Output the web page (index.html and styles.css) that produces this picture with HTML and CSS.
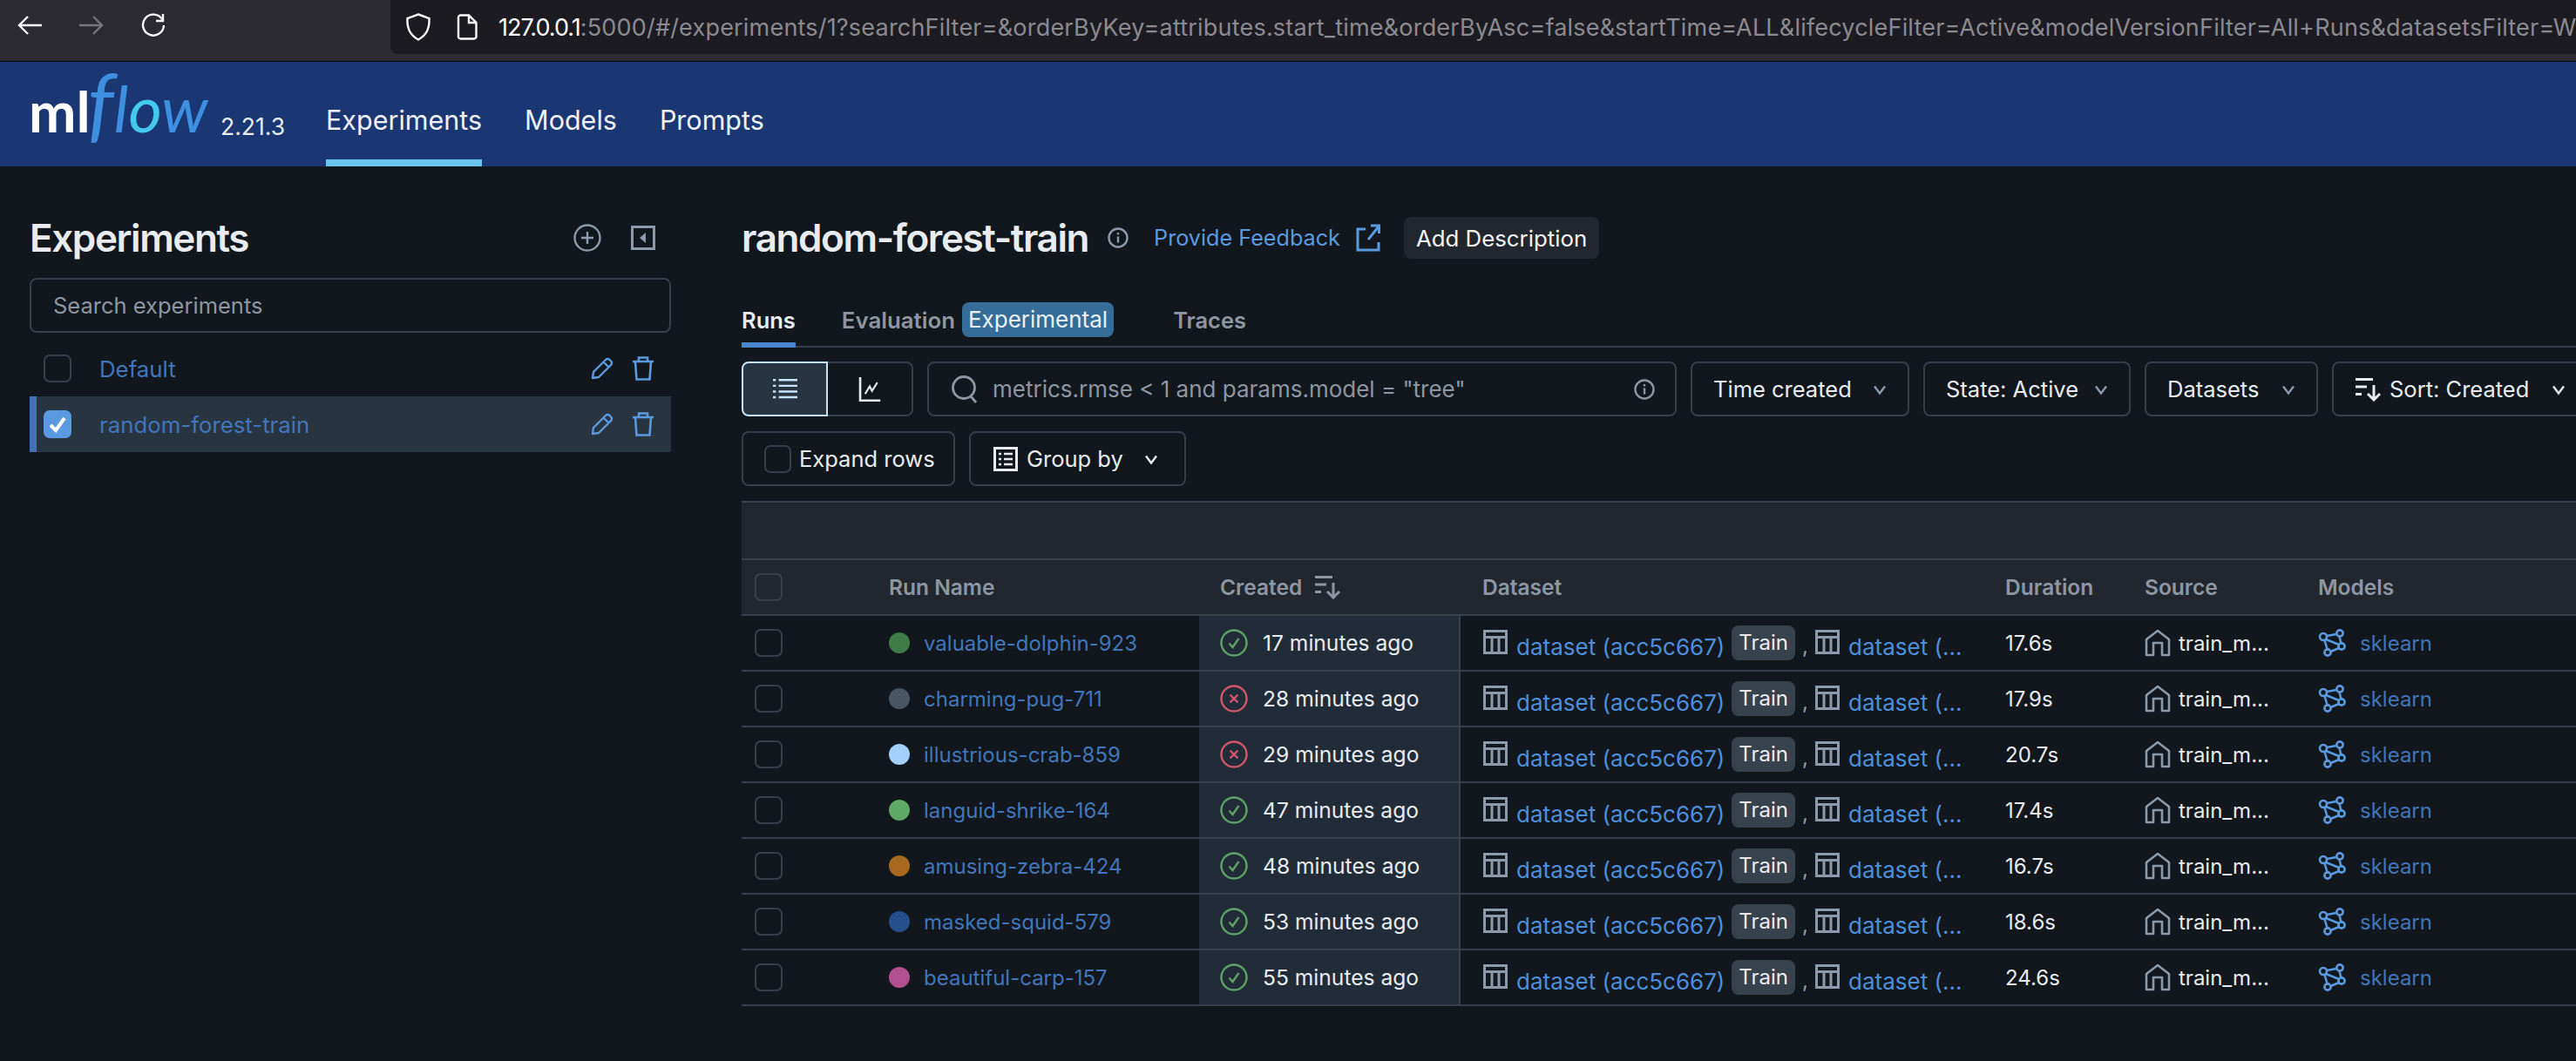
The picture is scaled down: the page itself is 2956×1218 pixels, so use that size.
FILE: index.html
```html
<!DOCTYPE html>
<html lang="en">
<head>
  <meta charset="UTF-8" />
  <title>MLflow</title>
  <link rel="stylesheet" href="styles.css">
</head>
<body>

  <svg class="defs" width="0" height="0">
    <symbol id="i-table" viewBox="0 0 28 28"><path d="M1.500 1.500h25v25h-25zM1.500 8.500h25M10 8.500v18M18 8.500v18" fill="none" stroke="currentColor" stroke-width="3"/></symbol>
    <symbol id="i-house" viewBox="0 0 30 32"><path d="M2 30V12L15 2l13 10v18h-8V16h-10v14z" fill="none" stroke="currentColor" stroke-width="2.600" stroke-linejoin="round"/></symbol>
    <symbol id="i-model" viewBox="0 0 32 32"><g fill="none" stroke="currentColor" stroke-width="2.600"><circle cx="6" cy="9" r="4"/><circle cx="25" cy="5" r="3.600"/><circle cx="27" cy="20" r="3.600"/><circle cx="11" cy="27" r="3.600"/><path d="M10 8l11-2M24.500 9l2 7.500M24 22l-9.500 4M7.500 13l3 10M9 12l15 6"/></g></symbol>
    <symbol id="i-ok" viewBox="0 0 32 32"><circle cx="16" cy="16" r="14.500" fill="none" stroke="#5da466" stroke-width="2.400"/><path d="M10.500 16.500l4 4.500 7-10" fill="none" stroke="#5da466" stroke-width="2.400"/></symbol>
    <symbol id="i-err" viewBox="0 0 32 32"><circle cx="16" cy="16" r="14.500" fill="none" stroke="#d4566c" stroke-width="2.400"/><path d="M11.500 11.500l9 9M20.500 11.500l-9 9" fill="none" stroke="#d4566c" stroke-width="2.400"/></symbol>
    <symbol id="i-pencil" viewBox="0 0 26 26"><path d="M2 24l1-7L17 3a3 3 0 0 1 4.500 0l1.500 1.500a3 3 0 0 1 0 4.500L9 23zM14.500 5.500l6 6" fill="none" stroke="currentColor" stroke-width="2.400" stroke-linejoin="round"/></symbol>
    <symbol id="i-trash" viewBox="0 0 26 28"><path d="M1 6h24M8 6V1.500h10V6M4 6l1.500 20.500h15L22 6" fill="none" stroke="currentColor" stroke-width="2.600"/></symbol>
    <symbol id="i-info" viewBox="0 0 24 24"><circle cx="12" cy="12" r="10.500" fill="none" stroke="currentColor" stroke-width="2.400"/><path d="M12 10.500v7M12 6v2.600" stroke="currentColor" stroke-width="2.400"/></symbol>
    <symbol id="i-chevron" viewBox="0 0 16 16"><path d="M2 4.500l6 8 6-8" fill="none" stroke="currentColor" stroke-width="2.400"/></symbol>
    <symbol id="i-sort" viewBox="0 0 30 28"><path d="M1 2.500h20M1 11h13M1 19.500h7M22 9v17M15 19l7 7 7-7" fill="none" stroke="currentColor" stroke-width="3"/></symbol>
  </svg>

  <div class="browser-bar">
    <div class="nav-btns">
      <svg class="nav-icon" viewBox="0 0 28 24"><path d="M28 12H2M12 2L2 12l10 10" fill="none" stroke="#fbfbfe" stroke-width="2.400"/></svg>
      <svg class="nav-icon dim" viewBox="0 0 28 24"><path d="M0 12h26M16 2l10 10-10 10" fill="none" stroke="#77767c" stroke-width="2.400"/></svg>
      <svg class="nav-icon" viewBox="0 0 28 28"><path d="M24 7A12 12 0 1 0 26 14M25 1v8h-8" fill="none" stroke="#fbfbfe" stroke-width="2.400"/></svg>
    </div>
    <div class="url-box">
      <svg class="shield" viewBox="0 0 28 32"><path d="M14 1.500L26.500 6c.5 12-3 19-12.500 24.500C4.500 25 1 18 1.500 6z" fill="none" stroke="#fbfbfe" stroke-width="2.400"/></svg>
      <svg class="file" viewBox="0 0 24 30"><path d="M2 4a2.500 2.500 0 0 1 2.500-2.500H14L22.500 10v16a2.500 2.500 0 0 1-2.500 2.500H4.500A2.500 2.500 0 0 1 2 26zM14 1.500V10h8.500" fill="none" stroke="#fbfbfe" stroke-width="2.400"/></svg>
      <div class="url"><span class="url-host">127.0.0.1</span>:5000/#/experiments/1?searchFilter=&amp;orderByKey=attributes.start_time&amp;orderByAsc=false&amp;startTime=ALL&amp;lifecycleFilter=Active&amp;modelVersionFilter=All+Runs&amp;datasetsFilter=W10=</div>
    </div>
  </div>

  <header class="topbar">
    <div class="logo"><span class="logo-ml">ml</span><span class="logo-flow"><span class="logo-f">f</span>l<span class="logo-o">o</span>w</span></div>
    <span class="version">2.21.3</span>
    <nav class="topnav">
      <a class="active">Experiments</a>
      <a>Models</a>
      <a>Prompts</a>
    </nav>
  </header>

  <div class="page">
    <aside class="sidebar">
      <div class="side-head">
        <h2>Experiments</h2>
        <div class="side-actions">
          <svg class="icon-plus" viewBox="0 0 32 32"><circle cx="16" cy="16" r="14.500" fill="none" stroke="currentColor" stroke-width="2.400"/><path d="M16 9v14M9 16h14" stroke="currentColor" stroke-width="2.400"/></svg>
          <svg class="icon-collapse" viewBox="0 0 28 28"><path d="M1.500 1.500h25v25h-25z" fill="none" stroke="currentColor" stroke-width="3"/><path d="M17 8v12l-7-6z" fill="currentColor"/></svg>
        </div>
      </div>
      <div class="side-search">Search experiments</div>
      <div class="exp-list">
        <div class="exp-row">
          <span class="check"></span>
          <span class="exp-name">Default</span>
          <svg class="icon-edit"><use href="#i-pencil"/></svg>
          <svg class="icon-del"><use href="#i-trash"/></svg>
        </div>
        <div class="exp-row selected">
          <span class="check checked"><svg viewBox="0 0 32 32"><path d="M8 17l6 6 10-14" fill="none" stroke="#fff" stroke-width="4"/></svg></span>
          <span class="exp-name">random-forest-train</span>
          <svg class="icon-edit"><use href="#i-pencil"/></svg>
          <svg class="icon-del"><use href="#i-trash"/></svg>
        </div>
      </div>
    </aside>

    <main class="content">
      <div class="title-row">
        <h1>random-forest-train</h1>
        <svg class="title-info"><use href="#i-info"/></svg>
        <a class="feedback">Provide Feedback</a>
        <svg class="ext-link" viewBox="0 0 28 32"><path d="M11 6H2v24h24v-9M14 18L26 3M17 2h9.500v9" fill="none" stroke="currentColor" stroke-width="3"/></svg>
        <button class="add-desc">Add Description</button>
      </div>

      <div class="tabs">
        <a class="tab active">Runs</a>
        <a class="tab eval">Evaluation</a>
        <span class="pill-exp">Experimental</span>
        <a class="tab traces">Traces</a>
      </div>

      <div class="toolbar">
        <div class="view-toggle">
          <span class="view-btn on">
            <svg viewBox="0 0 34 32"><path d="M8 3h26M8 11h26M8 19h26M8 27h26M0 3h4M0 11h4M0 19h4M0 27h4" stroke="#c5e3fb" stroke-width="3"/></svg>
          </span>
          <span class="view-btn">
            <svg viewBox="0 0 28 32"><path d="M1.500 0v30.500H28" fill="none" stroke="#e8ecf0" stroke-width="3"/><path d="M8 22l6-10 3 6 7-11" fill="none" stroke="#e8ecf0" stroke-width="2.400"/></svg>
          </span>
        </div>
        <div class="run-search">
          <svg class="search-icon" viewBox="0 0 30 32"><circle cx="14" cy="14" r="12.500" fill="none" stroke="currentColor" stroke-width="2.800"/><path d="M22 24l6 7" stroke="currentColor" stroke-width="2.800"/></svg>
          <span class="search-text">metrics.rmse &lt; 1 and params.model = "tree"</span>
          <svg class="search-info"><use href="#i-info"/></svg>
        </div>
        <button class="tool-btn btn-time">Time created <svg class="chev"><use href="#i-chevron"/></svg></button>
        <button class="tool-btn btn-state">State: Active <svg class="chev"><use href="#i-chevron"/></svg></button>
        <button class="tool-btn btn-data">Datasets <svg class="chev"><use href="#i-chevron"/></svg></button>
        <button class="tool-btn btn-sort"><svg class="sort-icon"><use href="#i-sort"/></svg> Sort: Created <svg class="chev light"><use href="#i-chevron"/></svg></button>
      </div>

      <div class="toolbar second">
        <label class="tool-btn btn-expand"><span class="check small"></span>Expand rows</label>
        <button class="tool-btn btn-group">
          <svg class="group-icon" viewBox="0 0 28 28"><path d="M1.500 1.500h25v25h-25z" fill="none" stroke="currentColor" stroke-width="3"/><path d="M6 8h3M12 8h10M6 14h3M12 14h10M6 20h3M12 20h10" stroke="currentColor" stroke-width="2.600"/></svg>
          Group by
          <svg class="chev light"><use href="#i-chevron"/></svg>
        </button>
      </div>

      <div class="runs-table">
        <div class="group-head"></div>
        <div class="t-row t-head">
          <div class="c-check"><span class="check"></span></div>
          <div>Run Name</div>
          <div class="c-created-head">Created <svg class="sort-icon dim"><use href="#i-sort"/></svg></div>
          <div class="c-data-head">Dataset</div>
          <div>Duration</div>
          <div>Source</div>
          <div>Models</div>
        </div>

        <div class="t-row">
          <div class="c-check"><span class="check"></span></div>
          <div class="c-name"><span class="dot dot-green"></span><a>valuable-dolphin-923</a></div>
          <div class="c-created"><svg class="status"><use href="#i-ok"/></svg>17 minutes ago</div>
          <div class="c-data"><svg class="tbl"><use href="#i-table"/></svg><a class="ds-link">dataset (acc5c667)</a><span class="tag">Train</span><span class="comma">,</span><svg class="tbl"><use href="#i-table"/></svg><a class="ds-link">dataset (…</a></div>
          <div class="c-val">17.6s</div>
          <div class="c-source"><svg class="house"><use href="#i-house"/></svg>train_m...</div>
          <div class="c-model"><svg class="model"><use href="#i-model"/></svg><a>sklearn</a></div>
        </div>
        <div class="t-row">
          <div class="c-check"><span class="check"></span></div>
          <div class="c-name"><span class="dot dot-grey"></span><a>charming-pug-711</a></div>
          <div class="c-created"><svg class="status"><use href="#i-err"/></svg>28 minutes ago</div>
          <div class="c-data"><svg class="tbl"><use href="#i-table"/></svg><a class="ds-link">dataset (acc5c667)</a><span class="tag">Train</span><span class="comma">,</span><svg class="tbl"><use href="#i-table"/></svg><a class="ds-link">dataset (…</a></div>
          <div class="c-val">17.9s</div>
          <div class="c-source"><svg class="house"><use href="#i-house"/></svg>train_m...</div>
          <div class="c-model"><svg class="model"><use href="#i-model"/></svg><a>sklearn</a></div>
        </div>
        <div class="t-row">
          <div class="c-check"><span class="check"></span></div>
          <div class="c-name"><span class="dot dot-sky"></span><a>illustrious-crab-859</a></div>
          <div class="c-created"><svg class="status"><use href="#i-err"/></svg>29 minutes ago</div>
          <div class="c-data"><svg class="tbl"><use href="#i-table"/></svg><a class="ds-link">dataset (acc5c667)</a><span class="tag">Train</span><span class="comma">,</span><svg class="tbl"><use href="#i-table"/></svg><a class="ds-link">dataset (…</a></div>
          <div class="c-val">20.7s</div>
          <div class="c-source"><svg class="house"><use href="#i-house"/></svg>train_m...</div>
          <div class="c-model"><svg class="model"><use href="#i-model"/></svg><a>sklearn</a></div>
        </div>
        <div class="t-row">
          <div class="c-check"><span class="check"></span></div>
          <div class="c-name"><span class="dot dot-lime"></span><a>languid-shrike-164</a></div>
          <div class="c-created"><svg class="status"><use href="#i-ok"/></svg>47 minutes ago</div>
          <div class="c-data"><svg class="tbl"><use href="#i-table"/></svg><a class="ds-link">dataset (acc5c667)</a><span class="tag">Train</span><span class="comma">,</span><svg class="tbl"><use href="#i-table"/></svg><a class="ds-link">dataset (…</a></div>
          <div class="c-val">17.4s</div>
          <div class="c-source"><svg class="house"><use href="#i-house"/></svg>train_m...</div>
          <div class="c-model"><svg class="model"><use href="#i-model"/></svg><a>sklearn</a></div>
        </div>
        <div class="t-row">
          <div class="c-check"><span class="check"></span></div>
          <div class="c-name"><span class="dot dot-orange"></span><a>amusing-zebra-424</a></div>
          <div class="c-created"><svg class="status"><use href="#i-ok"/></svg>48 minutes ago</div>
          <div class="c-data"><svg class="tbl"><use href="#i-table"/></svg><a class="ds-link">dataset (acc5c667)</a><span class="tag">Train</span><span class="comma">,</span><svg class="tbl"><use href="#i-table"/></svg><a class="ds-link">dataset (…</a></div>
          <div class="c-val">16.7s</div>
          <div class="c-source"><svg class="house"><use href="#i-house"/></svg>train_m...</div>
          <div class="c-model"><svg class="model"><use href="#i-model"/></svg><a>sklearn</a></div>
        </div>
        <div class="t-row">
          <div class="c-check"><span class="check"></span></div>
          <div class="c-name"><span class="dot dot-navy"></span><a>masked-squid-579</a></div>
          <div class="c-created"><svg class="status"><use href="#i-ok"/></svg>53 minutes ago</div>
          <div class="c-data"><svg class="tbl"><use href="#i-table"/></svg><a class="ds-link">dataset (acc5c667)</a><span class="tag">Train</span><span class="comma">,</span><svg class="tbl"><use href="#i-table"/></svg><a class="ds-link">dataset (…</a></div>
          <div class="c-val">18.6s</div>
          <div class="c-source"><svg class="house"><use href="#i-house"/></svg>train_m...</div>
          <div class="c-model"><svg class="model"><use href="#i-model"/></svg><a>sklearn</a></div>
        </div>
        <div class="t-row">
          <div class="c-check"><span class="check"></span></div>
          <div class="c-name"><span class="dot dot-pink"></span><a>beautiful-carp-157</a></div>
          <div class="c-created"><svg class="status"><use href="#i-ok"/></svg>55 minutes ago</div>
          <div class="c-data"><svg class="tbl"><use href="#i-table"/></svg><a class="ds-link">dataset (acc5c667)</a><span class="tag">Train</span><span class="comma">,</span><svg class="tbl"><use href="#i-table"/></svg><a class="ds-link">dataset (…</a></div>
          <div class="c-val">24.6s</div>
          <div class="c-source"><svg class="house"><use href="#i-house"/></svg>train_m...</div>
          <div class="c-model"><svg class="model"><use href="#i-model"/></svg><a>sklearn</a></div>
        </div>
      </div>
    </main>
  </div>

</body>
</html>
```

FILE: styles.css
```css
* {
  box-sizing: border-box;
}

html, body {
  margin: 0;
  height: 100%;
  overflow: hidden;
}

body {
  background-color: #11171c;
  color: #e8ecf0;
  font-family: Inter, "Noto Sans", sans-serif;
  font-size: 25.5px;
}

a {
  color: inherit;
  text-decoration: none;
}

button {
  font: inherit;
  color: inherit;
  background: none;
}

.defs {
  display: block;
  height: 0;
}

/* browser chrome */
.browser-bar {
  display: flex;
  height: 71px;
  background-color: #2b2a33;
  border-bottom: 1px solid #0c0c0f;
}

.nav-btns {
  display: flex;
  align-items: center;
  gap: 43px;
  width: 448px;
  padding: 0 0 12px 20px;
}

.nav-icon {
  width: 28px;
  height: 28px;
}

.url-box {
  flex: 1;
  min-width: 0;
  display: flex;
  align-items: center;
  height: 62px;
  padding-left: 18px;
  background-color: #1c1b22;
  border-bottom-left-radius: 8px;
  overflow: hidden;
}

.shield {
  width: 28px;
  height: 32px;
  flex: none;
}

.file {
  width: 24px;
  height: 30px;
  flex: none;
  margin-left: 30px;
}

.url {
  margin-left: 24px;
  font-size: 27px;
  letter-spacing: 0.2px;
  white-space: nowrap;
  color: #8b8a90;
}

.url-host {
  color: #fbfbfe;
  letter-spacing: -1px;
}

/* mlflow header */
.topbar {
  display: flex;
  align-items: stretch;
  height: 120px;
  padding-left: 33px;
  background-color: #1a3673;
}

.logo {
  display: flex;
  align-items: baseline;
  width: 220px;
  margin-top: -2px;
  font-family: Lato, sans-serif;
  line-height: 1;
  white-space: nowrap;
}

.logo-ml {
  font-size: 65px;
  font-weight: 700;
  color: #fff;
}

.logo-flow {
  font-size: 74px;
  font-style: italic;
  color: #3f8fe0;
}

.logo-f {
  font-size: 94px;
  margin-left: -3px;
}

.logo-o {
  color: #43c9ed;
}

.version {
  align-self: center;
  width: 121px;
  margin-top: 28px;
  font-size: 26.5px;
  color: #e8ecf0;
}

.topnav {
  display: flex;
  gap: 49px;
}

.topnav a {
  display: flex;
  align-items: center;
  height: 120px;
  padding-top: 20px;
  font-size: 30.5px;
  color: #eef2f8;
  border-bottom: 8px solid transparent;
}

.topnav a.active {
  border-bottom-color: #6bc6ee;
}

.page {
  display: flex;
}

/* sidebar */
.sidebar {
  width: 851px;
  flex: none;
  padding: 58px 81px 0 34px;
}

.side-head {
  display: flex;
  align-items: center;
  justify-content: space-between;
  height: 48px;
}

.side-head h2 {
  margin: 0;
  font-size: 44px;
  font-weight: 600;
  letter-spacing: -1.400px;
}

.side-actions {
  display: flex;
  align-items: center;
  gap: 34px;
  padding-right: 18px;
  color: #8d9aab;
}

.icon-plus {
  width: 32px;
  height: 32px;
}

.icon-collapse {
  width: 28px;
  height: 28px;
}

.side-search {
  display: flex;
  align-items: center;
  height: 63px;
  margin-top: 22px;
  padding-left: 25px;
  color: #8d96a2;
  border: 2px solid #37404a;
  border-radius: 8px;
}

.exp-list {
  margin-top: 9px;
}

.exp-row {
  display: flex;
  align-items: center;
  height: 64px;
  padding: 0 19px 0 8px;
  border-left: 8px solid transparent;
  color: #5a9ae0;
}

.exp-row.selected {
  background-color: #293441;
  border-left-color: #4272b5;
}

.exp-name {
  flex: 1;
  margin-left: 32px;
  font-size: 25.8px;
  color: #4176bb;
}

.icon-edit {
  width: 26px;
  height: 26px;
}

.icon-del {
  width: 26px;
  height: 28px;
  margin-left: 21px;
}

.check {
  display: block;
  width: 32px;
  height: 32px;
  flex: none;
  border: 2px solid #37404a;
  border-radius: 7px;
}

.check.checked {
  background-color: #5a9ae0;
  border: none;
}

.check.checked svg {
  display: block;
}

.check.small {
  width: 31px;
}

/* main column */
.content {
  flex: 1;
  min-width: 0;
  padding-top: 58px;
}

.title-row {
  display: flex;
  align-items: center;
  height: 48px;
  white-space: nowrap;
}

.title-row h1 {
  margin: 0;
  font-size: 44px;
  font-weight: 600;
  letter-spacing: -1.400px;
}

.title-info {
  width: 24px;
  height: 24px;
  margin-left: 22px;
  color: #8d9aab;
}

.feedback {
  margin-left: 29px;
  font-size: 25.2px;
  color: #5a9ae0;
}

.ext-link {
  width: 28px;
  height: 32px;
  margin-left: 18px;
  color: #5a9ae0;
}

.add-desc {
  height: 48px;
  margin-left: 27px;
  padding: 0 14px;
  background-color: #22272f;
  border: none;
  border-radius: 8px;
  font-size: 25.8px;
  color: #f2f4f7;
}

.tabs {
  display: flex;
  align-items: center;
  height: 62px;
  margin-top: 40px;
  border-bottom: 2px solid #373f4a;
  color: #8d96a2;
  font-weight: 600;
}

.tab {
  display: flex;
  align-items: center;
  height: 62px;
  margin-bottom: -2px;
  padding-top: 4px;
  border-bottom: 6px solid transparent;
}

.tab.active {
  color: #e8ecf0;
  border-bottom-color: #4a86d0;
}

.tab.eval {
  margin-left: 53px;
  font-size: 25.8px;
}

.pill-exp {
  margin-left: 8px;
  padding: 0 7px;
  height: 40px;
  line-height: 40px;
  background-color: #366d98;
  border-radius: 8px;
  font-size: 26px;
  color: #e8f1f8;
  font-weight: 400;
}

.tab.traces {
  margin-left: 68px;
}

.toolbar {
  display: flex;
  gap: 16px;
  height: 63px;
  margin-top: 16px;
}

.toolbar.second {
  margin-top: 17px;
}

.view-toggle {
  display: flex;
  flex: none;
}

.view-btn {
  display: flex;
  align-items: center;
  justify-content: center;
  width: 98px;
  border: 2px solid #37404a;
  border-left: none;
  border-radius: 0 8px 8px 0;
}

.view-btn svg {
  width: 28px;
  height: 28px;
}

.view-btn.on {
  width: 99px;
  background-color: #293441;
  border: 2px solid #c5e3fb;
  border-radius: 8px 0 0 8px;
}

.run-search {
  display: flex;
  align-items: center;
  flex: none;
  width: 860px;
  padding: 0 23px 0 26px;
  border: 2px solid #37404a;
  border-radius: 8px;
  color: #8d96a2;
}

.search-icon {
  width: 30px;
  height: 32px;
  flex: none;
}

.search-text {
  flex: 1;
  margin-left: 17px;
  font-size: 26px;
  white-space: nowrap;
}

.search-info {
  width: 24px;
  height: 24px;
}

.tool-btn {
  display: flex;
  align-items: center;
  gap: 10px;
  flex: none;
  padding: 0 24px 0 24px;
  border: 2px solid #37404a;
  border-radius: 8px;
  color: #e8ecf0;
  white-space: nowrap;
}

.btn-time { width: 251px; }
.btn-state { width: 238px; }
.btn-data { width: 199px; }
.btn-sort { width: 300px; padding-right: 30px; }
.btn-expand { width: 245px; gap: 9px; }
.btn-group { width: 249px; padding-left: 26px; padding-right: 30px; }

.chev {
  width: 16px;
  height: 16px;
  flex: none;
  margin-left: auto;
  color: #8d9aab;
}

.chev.light {
  color: #e8ecf0;
}

.sort-icon {
  width: 30px;
  height: 28px;
  flex: none;
  color: #e8ecf0;
}

.sort-icon.dim {
  color: #8d96a2;
}

.group-icon {
  width: 28px;
  height: 28px;
  flex: none;
  color: #e8ecf0;
}

/* runs table */
.runs-table {
  width: 2105px;
  margin-top: 17px;
  border-top: 2px solid #37404a;
  font-size: 24px;
}

.group-head {
  height: 66px;
  background-color: #22272f;
  border-bottom: 2px solid #37404a;
}

.t-row {
  display: grid;
  grid-template-columns: 169px 356px 300px 625px 160px 199px 1fr;
  height: 64px;
  border-bottom: 2px solid #37404a;
}

.t-row > div {
  display: flex;
  align-items: center;
  white-space: nowrap;
}

.t-head {
  background-color: #22272f;
  color: #8d96a2;
  font-size: 24.500px;
  font-weight: 600;
}

.c-check {
  padding-left: 15px;
}

.c-created-head svg {
  margin-left: 14px;
}

.c-created-head {
  padding-left: 24px;
}

.c-data-head {
  padding-left: 25px;
}

.dot {
  width: 24px;
  height: 24px;
  flex: none;
  border-radius: 50%;
}

.dot-green { background-color: #3f7d46; }
.dot-grey { background-color: #4a5563; }
.dot-sky { background-color: #a3cffb; }
.dot-lime { background-color: #5fa865; }
.dot-orange { background-color: #a8691f; }
.dot-navy { background-color: #24508c; }
.dot-pink { background-color: #b0508f; }

.c-name a {
  margin-left: 16px;
  color: #4176bb;
}

.t-row > .c-created {
  padding-left: 24px;
  font-size: 24.600px;
  background-color: #222c38;
  border-right: 2px solid #37404a;
}

.status {
  width: 32px;
  height: 32px;
  flex: none;
  margin-right: 17px;
}

.c-data {
  padding-left: 26px;
}

.tbl {
  width: 28px;
  height: 28px;
  flex: none;
  color: #8d9aab;
  margin-top: -2px;
}

.ds-link {
  margin: 8px 0 0 10px;
  font-size: 26px;
  color: #4d8fdb;
}

.tag {
  height: 40px;
  margin-left: 8px;
  padding: 0 8px;
  line-height: 40px;
  background-color: #37424d;
  border-radius: 8px;
}

.comma {
  margin: 6px 0 0 8px;
  width: 15px;
  color: #8d9aab;
}

.house {
  width: 30px;
  height: 32px;
  flex: none;
  color: #8d9aab;
  margin-right: 9px;
}

.model {
  width: 32px;
  height: 32px;
  flex: none;
  color: #5a9ae0;
}

.c-model a {
  margin-left: 16px;
  color: #4176bb;
}
```
